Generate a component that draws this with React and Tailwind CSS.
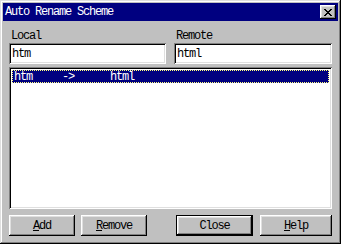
import React from 'react';

const font = { fontFamily: '"Liberation Mono", "DejaVu Sans Mono", monospace' };

const raised =
  'shadow-[inset_-1px_-1px_0_#000,inset_1px_1px_0_#fff,inset_-2px_-2px_0_#808080,inset_2px_2px_0_#dfdfdf]';
const sunken =
  'shadow-[inset_1px_1px_0_#808080,inset_-1px_-1px_0_#fff,inset_2px_2px_0_#000,inset_-2px_-2px_0_#dfdfdf]';

const Button = ({ width, children, isDefault }) => (
  <div
    className={`h-[21px] ${width} bg-[#c0c0c0] ${isDefault ? 'border border-black' : ''}`}
  >
    <div className={`h-full w-full flex items-center justify-center pt-[1px] ${raised}`}>
      <span className="text-[12px] leading-[12px] tracking-[-1.2px] text-black">{children}</span>
    </div>
  </div>
);

const Field = ({ label, value, width }) => (
  <div className={`flex flex-col ${width}`}>
    <span className="text-[12px] leading-[13px] tracking-[-1.2px] text-black pl-[2px] h-[13px]">
      {label}
    </span>
    <div className={`h-[21px] bg-white flex items-center pl-[3px] pt-[1px] ${sunken}`}>
      <span className="text-[12px] leading-[12px] tracking-[-1.2px] text-black">{value}</span>
    </div>
  </div>
);

export default function App() {
  return (
    <div
      style={font}
      className="w-[341px] h-[244px] bg-[#c0c0c0] p-[3px] flex flex-col shadow-[inset_-1px_-1px_0_#000,inset_1px_1px_0_#dfdfdf,inset_-2px_-2px_0_#808080,inset_2px_2px_0_#fff]"
    >
      <div className="h-[18px] bg-[#000080] flex items-center justify-between pl-[2px] pr-[2px]">
        <span className="text-white text-[12px] leading-[12px] tracking-[-1.2px]">Auto Rename Scheme</span>
        <div className={`w-[16px] h-[14px] bg-[#c0c0c0] flex items-center justify-center ${raised}`}>
          <svg width="8" height="7" viewBox="0 0 8 7" shapeRendering="crispEdges">
            <path d="M0 0h2v1h-2zM6 0h2v1h-2zM1 1h2v1h-2zM5 1h2v1h-2zM2 2h4v1h-4zM3 3h2v1h-2zM2 4h4v1h-4zM1 5h2v1h-2zM5 5h2v1h-2zM0 6h2v1h-2zM6 6h2v1h-2z" fill="#000" />
          </svg>
        </div>
      </div>

      <div className="flex flex-col px-[6px] pt-[9px]">
        <div className="flex gap-[8px]">
          <Field label="Local" value="htm" width="w-[157px]" />
          <Field label="Remote" value="html" width="w-[158px]" />
        </div>

        <div className={`mt-[3px] h-[142px] bg-white p-[2px] ${sunken}`}>
          <div className="h-[13px] mt-[1px] mx-[1px] bg-[#000080] border border-dotted border-[#ffff80] flex items-center">
            <span className="whitespace-pre text-white text-[12px] leading-[12px] tracking-[-1.2px] pl-[1px]">
              {'htm     ->      html'}
            </span>
          </div>
        </div>

        <div className="flex mt-[6px]">
          <Button width="w-[66px]">
            <span className="underline">A</span>dd
          </Button>
          <div className="w-[6px]" />
          <Button width="w-[66px]">
            <span className="underline">R</span>emove
          </Button>
          <div className="w-[29px]" />
          <Button width="w-[77px]" isDefault>
            Close
          </Button>
          <div className="w-[7px]" />
          <Button width="w-[72px]">
            <span className="underline">H</span>elp
          </Button>
        </div>
      </div>
    </div>
  );
}
